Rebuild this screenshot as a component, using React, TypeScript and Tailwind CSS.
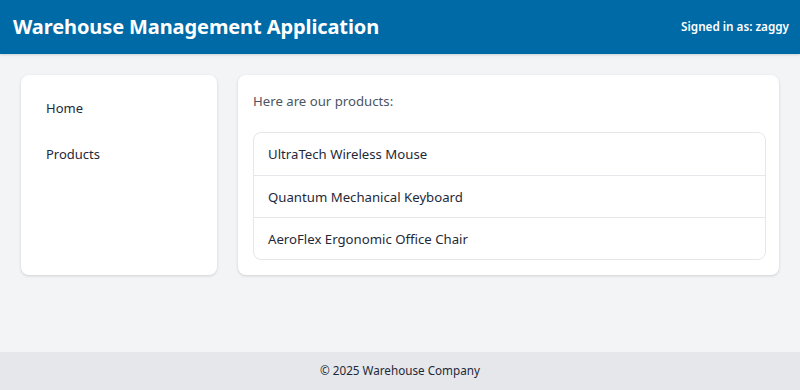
export default function App() {
  const products = [
    "UltraTech Wireless Mouse",
    "Quantum Mechanical Keyboard",
    "AeroFlex Ergonomic Office Chair",
  ];
  return (
    <div
      className="flex min-h-[390px] flex-col bg-[#f3f4f6]"
      style={{ fontFamily: '"Segoe UI", "Noto Sans", sans-serif' }}
    >
      <header className="flex h-[54px] items-center justify-between bg-[#006aa7] pl-[13px] pr-[11px] text-white shadow-[0_1px_2px_rgba(0,0,0,0.15)]">
        <h1 className="text-[20px] font-bold tracking-[-0.1px]">Warehouse Management Application</h1>
        <div className="text-[11.7px] font-semibold">Signed in as: zaggy</div>
      </header>
      <main className="flex flex-1 items-start gap-[21px] p-[21px]">
        <nav className="flex h-[200px] w-[196px] flex-col rounded-lg bg-white pt-[11px] shadow-[0_1px_3px_rgba(0,0,0,0.15)]">
          <a className="flex h-[46px] items-center px-[25px] text-[13px] text-[#1f2937]">Home</a>
          <a className="flex h-[46px] items-center px-[25px] text-[13px] text-[#1f2937]">Products</a>
        </nav>
        <section className="flex h-[200px] flex-1 flex-col rounded-lg bg-white pl-[15px] pr-[13px] pt-[14px] shadow-[0_1px_3px_rgba(0,0,0,0.15)]">
          <p className="mb-[18px] h-[25px] text-[13.2px] leading-[25px] text-[#4b5563]">Here are our products:</p>
          <ul className="rounded-lg border border-[#e5e7eb]">
            {products.map((p, i) => (
              <li
                key={p}
                className={`flex h-[42px] items-center px-[14px] pt-[2px] text-[13.2px] text-[#1f2937] ${i > 0 ? "border-t border-[#e5e7eb]" : ""}`}
              >
                {p}
              </li>
            ))}
          </ul>
        </section>
      </main>
      <footer className="flex h-[38px] items-center justify-center bg-[#e5e7eb] text-[11.7px] text-[#1f2937]">
        © 2025 Warehouse Company
      </footer>
    </div>
  );
}
